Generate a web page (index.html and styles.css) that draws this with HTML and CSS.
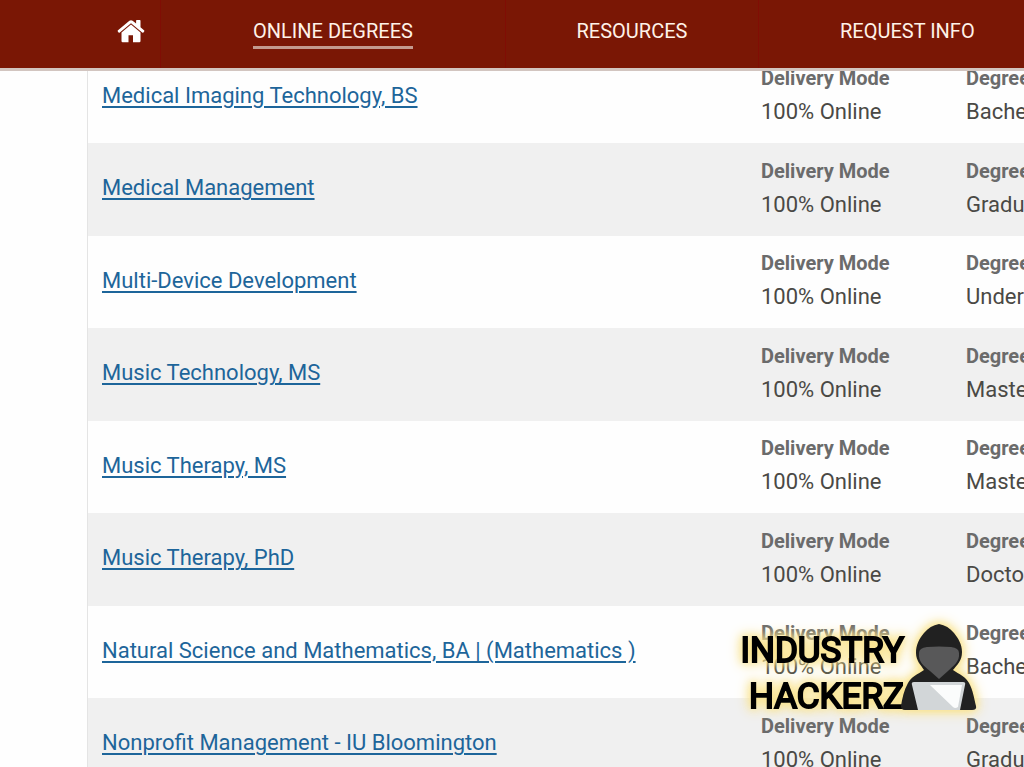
FILE: index.html
```html
<!DOCTYPE html>
<html lang="en">
<head>
<meta charset="utf-8">
<meta name="viewport" content="width=device-width, initial-scale=1">
<title>Online Degrees</title>
<link rel="stylesheet" href="styles.css">
</head>
<body>
	<header class="header">
		<nav class="nav" aria-label="Main">
			<a class="navItem" href="#" aria-label="Home">
				<svg class="homeIcon" viewBox="0 0 28 24" aria-hidden="true">
					<path d="M14 5.6 4.5 13.4V22q0 1.2 1.2 1.2H11.500V16.200h4.500v7H22.300q1.200 0 1.200-1.200V13.400z"/>
					<path d="M14 1.200q-.9 0-1.600.6L1 11.300q-.7.600-.2 1.200l.8 1q.5.500 1.200 0L14 4.200l11.200 9.300q.7.500 1.200 0l.8-1q.5-.600-.2-1.200L23.500 8.300V1.700q0-.6-.6-.6h-3.200q-.6 0-.6.600v2.900L15.600 1.800Q14.900 1.200 14 1.200z"/>
				</svg>
			</a>
			<a class="navItem" href="#"><span class="current">ONLINE DEGREES</span></a>
			<a class="navItem" href="#">RESOURCES</a>
			<a class="navItem navLast" href="#">REQUEST INFO</a>
		</nav>
	</header>

	<main>
		<ul class="degrees">
			<li class="degree">
				<a class="degreeName" href="#">Medical Imaging Technology, BS</a>
				<div class="info"><h3>Delivery Mode</h3><p>100% Online</p></div>
				<div class="info"><h3>Degree Type</h3><p>Bachelor's</p></div>
			</li>
			<li class="degree">
				<a class="degreeName" href="#">Medical Management</a>
				<div class="info"><h3>Delivery Mode</h3><p>100% Online</p></div>
				<div class="info"><h3>Degree Type</h3><p>Graduate</p></div>
			</li>
			<li class="degree">
				<a class="degreeName" href="#">Multi-Device Development</a>
				<div class="info"><h3>Delivery Mode</h3><p>100% Online</p></div>
				<div class="info"><h3>Degree Type</h3><p>Undergraduate</p></div>
			</li>
			<li class="degree">
				<a class="degreeName" href="#">Music Technology, MS</a>
				<div class="info"><h3>Delivery Mode</h3><p>100% Online</p></div>
				<div class="info"><h3>Degree Type</h3><p>Master's</p></div>
			</li>
			<li class="degree">
				<a class="degreeName" href="#">Music Therapy, MS</a>
				<div class="info"><h3>Delivery Mode</h3><p>100% Online</p></div>
				<div class="info"><h3>Degree Type</h3><p>Master's</p></div>
			</li>
			<li class="degree">
				<a class="degreeName" href="#">Music Therapy, PhD</a>
				<div class="info"><h3>Delivery Mode</h3><p>100% Online</p></div>
				<div class="info"><h3>Degree Type</h3><p>Doctorate</p></div>
			</li>
			<li class="degree">
				<a class="degreeName" href="#">Natural Science and Mathematics, BA | (Mathematics )</a>
				<div class="info"><h3>Delivery Mode</h3><p>100% Online</p></div>
				<div class="info"><h3>Degree Type</h3><p>Bachelor's</p></div>
			</li>
			<li class="degree">
				<a class="degreeName" href="#">Nonprofit Management - IU Bloomington</a>
				<div class="info"><h3>Delivery Mode</h3><p>100% Online</p></div>
				<div class="info"><h3>Degree Type</h3><p>Graduate</p></div>
			</li>
		</ul>
	</main>

	<div class="watermark">
		<div class="brand"><span>INDUSTRY</span><span>HACKERZ</span></div>
		<svg class="hacker" viewBox="0 0 76 86" aria-hidden="true">
			<path fill="#212121" d="M38 0C32 1 27 4 23 9C18 15 15 21 15 29C15 37 20 41 23 46C17 50 10 53 7 59C3 66 1 75 0 82Q0 86 4 86H71Q76 86 75 82C73 74 72 66 68 59C65 53 58 50 52 46C56 41 61 37 61 28C61 20 57 14 53 9C49 4 44 1 38 0z"/>
			<path fill="#585859" d="M18 29Q18 24 26 23Q38 22 50 23Q58 24 58 29C59 38 52 42 47 47L38 55L29 47C23 42 17 38 18 29z"/>
			<path fill="#d2d6d8" d="M13 58H62Q65 58 64 61L59 86H17L11 61Q10 58 13 58z"/>
			<path fill="#fbfcfc" d="M29 61H61L57 83Q54 85 52 83z"/>
		</svg>
	</div>
</body>
</html>
```
FILE: styles.css
```css
* {
	box-sizing: border-box;
}

body {
	margin: 0;
	overflow: hidden;
	background: #fefefe;
	color: #4a4945;
	font-family: Roboto, "Liberation Sans", sans-serif;
	font-size: 22px;
	line-height: 33px;
}

.header {
	position: fixed;
	top: 0;
	left: 0;
	right: 0;
	z-index: 1;
	border-bottom: 3px solid #d2c5c0;
	background: #7a1705;
}

.nav {
	display: grid;
	grid-template-columns: 59px 345fr 253fr 265fr;
	height: 68px;
	padding-left: 102px;
}

.navItem {
	display: flex;
	align-items: center;
	justify-content: center;
	padding-bottom: 6px;
	border-right: 1px solid #800d04;
	color: #fff2e8;
	font-size: 20px;
	text-decoration: none;
	white-space: nowrap;
}

.navLast {
	justify-content: flex-start;
	padding-left: 81px;
	border-right: 0;
}

.current {
	margin-top: 4px;
	border-bottom: 3px solid #c39a8e;
	line-height: 29px;
}

.homeIcon {
	width: 28px;
	height: 24px;
	fill: #fff;
}

/* the list runs under the fixed header */
.degrees {
	margin: 51px 0 0 87px;
	padding: 0;
	border-left: 1px solid #e4e4e4;
	list-style: none;
}

.degree {
	display: grid;
	grid-template-columns: 1fr 205px 58px;
	align-items: center;
	height: 92px;
	padding: 11px 0 15px 14px;
	overflow: hidden;
	white-space: nowrap;
}

.degree:nth-child(even) {
	height: 93px;
	background: #f0f0f0;
}

.degreeName {
	justify-self: start;
	color: #1d659a;
	text-decoration-thickness: 2px;
	text-underline-offset: 3px;
}

.info h3,
.info p {
	margin: 0;
}

.info h3 {
	color: #6b6b6b;
	font-size: 20px;
	line-height: 33px;
}

.watermark {
	position: fixed;
	right: 47px;
	bottom: 57px;
	z-index: 2;
	display: flex;
	align-items: flex-end;
	filter: drop-shadow(0 0 4px #fae38c) drop-shadow(0 0 6px #fae38c);
}

.brand {
	display: flex;
	flex-direction: column;
	align-items: flex-end;
	margin: 0 -3px -10px 0;
	color: #000;
	font-size: 35px;
	font-weight: 400;
	line-height: 46px;
	-webkit-text-stroke: 2px #000;
}

.hacker {
	width: 76px;
	height: 86px;
}
```
